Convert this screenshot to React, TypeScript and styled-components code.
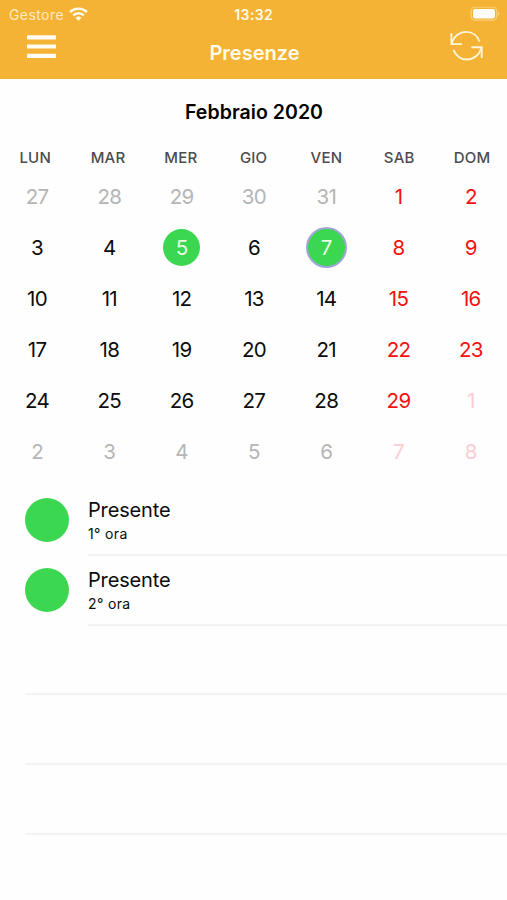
import React from "react";
import styled, { createGlobalStyle } from "styled-components";

const Global = createGlobalStyle`
  * { box-sizing: border-box; }
  body { margin: 0; background: #fff; }
`;

const Screen = styled.div`
  width: 507px;
  height: 900px;
  overflow: hidden;
  background: #fefefe;
  color: #0c0c0c;
  font-family: Inter, "Liberation Sans", sans-serif;
  display: flex;
  flex-direction: column;
`;

const Header = styled.header`
  height: 79px;
  flex: none;
  background: #f5b335;
  color: #fffbe9;
`;

const StatusBar = styled.div`
  height: 28px;
  padding: 0 7px 0 9px;
  display: grid;
  grid-template-columns: 1fr auto 1fr;
  align-items: center;
`;

const Carrier = styled.div`
  display: flex;
  align-items: center;
  gap: 5px;
  font-size: 14px;
  letter-spacing: 0.42px;
  color: #fdeabd;
`;

const Clock = styled.div`
  font-size: 14px;
  font-weight: 600;
  letter-spacing: 0.4px;
  margin-right: 1.5px;
`;

const Battery = styled.svg`
  justify-self: end;
`;

const NavBar = styled.div`
  height: 51px;
  padding: 0 23px 0 27px;
  display: grid;
  grid-template-columns: 1fr auto 1fr;
  align-items: start;
`;

const MenuIcon = styled.svg`
  margin-top: 6px;
`;

const Title = styled.h1`
  margin: 12px 2px 0 0;
  font-size: 20px;
  line-height: 26px;
  font-weight: 600;
`;

const RefreshIcon = styled.svg`
  justify-self: end;
`;

const Month = styled.h2`
  margin: 20px 0 0 1px;
  height: 26px;
  text-align: center;
  font-size: 19.5px;
  line-height: 26px;
  font-weight: 600;
  letter-spacing: 0.05px;
  color: #000;
`;

const Weekdays = styled.div`
  display: grid;
  grid-template-columns: repeat(7, 72.8px);
  margin: 23px 0 0 -1.2px;
  height: 23px;
  line-height: 20px;
  font-size: 15px;
  font-weight: 500;
  letter-spacing: 0.2px;
  text-align: center;
  color: #4b4c50;
`;

const Days = styled.div`
  display: grid;
  grid-template-columns: repeat(7, 72.3px);
  grid-auto-rows: 51px;
  margin-left: 0.9px;
`;

type Tone = "normal" | "muted" | "red" | "faded" | "onGreen";

const tones: Record<Tone, string> = {
  normal: "#0c0c0c",
  muted: "#b5b5b5",
  red: "#f5100f",
  faded: "#fbcdd3",
  onGreen: "#e6ffe6",
};

const Cell = styled.div<{ $tone: Tone }>`
  display: flex;
  align-items: center;
  justify-content: center;
  font-size: 20.5px;
  letter-spacing: -0.7px;
  color: ${(p) => tones[p.$tone]};
`;

const Marker = styled.span<{ $selected?: boolean }>`
  width: ${(p) => (p.$selected ? 41 : 37)}px;
  height: ${(p) => (p.$selected ? 41 : 37)}px;
  border: ${(p) => (p.$selected ? "2px solid #9ca7d8" : "0")};
  border-radius: 50%;
  background: #3cd750;
  display: flex;
  align-items: center;
  justify-content: center;
`;

const List = styled.div`
  margin: 9px 0 0 25px;
  display: grid;
  grid-template-rows: 70px 70px 69px 70px 70px;
`;

const Entry = styled.div`
  display: grid;
  grid-template-columns: 63px 1fr;
`;

const Dot = styled.div`
  width: 44px;
  height: 44px;
  margin-top: 12px;
  border-radius: 50%;
  background: #3cd750;
`;

const EntryText = styled.div`
  padding-top: 12px;
  border-bottom: 2px solid #f3f3f3;
`;

const EntryTitle = styled.div`
  font-size: 20px;
  line-height: 24px;
  letter-spacing: -0.15px;
`;

const EntryHour = styled.div`
  font-size: 14px;
  line-height: 20px;
  margin-top: 2px;
  letter-spacing: 0.35px;
`;

const EmptyRow = styled.div`
  border-bottom: 2px solid #f3f3f3;
`;

const weekdays = ["LUN", "MAR", "MER", "GIO", "VEN", "SAB", "DOM"];
const entries = [
  { state: "Presente", hour: "1° ora" },
  { state: "Presente", hour: "2° ora" },
];
const PRESENT = [5, 7];
const SELECTED = 7;

// 42 cells, starting on Monday 27 January 2020
const days = Array.from({ length: 42 }, (_, i) => {
  const offset = i - 4;
  const inMonth = offset >= 1 && offset <= 29;
  const label = offset < 1 ? offset + 31 : offset > 29 ? offset - 29 : offset;
  const weekend = i % 7 > 4;
  const present = inMonth && PRESENT.includes(label);
  const tone: Tone = present
    ? "onGreen"
    : weekend
      ? inMonth ? "red" : "faded"
      : inMonth ? "normal" : "muted";
  return { label, tone, present };
});

export default function App() {
  return (
    <Screen>
      <Global />
      <Header>
        <StatusBar>
          <Carrier>
            Gestore
            <svg width="19" height="15" viewBox="0 0 19 15" fill="none" stroke="#fffdf2" strokeWidth="2.4">
              <path d="M1.1 5.1a12 12 0 0 1 16.8 0" />
              <path d="M4.2 8.4a7.5 7.5 0 0 1 10.6 0" />
              <path d="M9.5 13.8 6.6 10.9a4.1 4.1 0 0 1 5.8 0Z" fill="#fffdf2" stroke="none" />
            </svg>
          </Carrier>
          <Clock>13:32</Clock>
          <Battery width="30" height="15" viewBox="0 0 30 15">
            <rect x="1.2" y="0.2" width="25.6" height="13" rx="4" fill="none" stroke="#f9cf7c" strokeWidth="1.3" />
            <rect x="3" y="2" width="22" height="9.4" rx="2.2" fill="#fffefa" />
            <path d="M28 4.5v4.4c1.8-.7 1.8-3.7 0-4.4Z" fill="#f9cf7c" />
          </Battery>
        </StatusBar>
        <NavBar>
          <MenuIcon width="29" height="26" viewBox="0 0 29 26" fill="#fffdf4">
            <rect y="1.2" width="29" height="4.2" rx="0.6" />
            <rect y="10.4" width="29" height="4.2" rx="0.6" />
            <rect y="19.8" width="29" height="4.2" rx="0.6" />
          </MenuIcon>
          <Title>Presenze</Title>
          <RefreshIcon width="34" height="34" viewBox="0 0 34 34" fill="none" stroke="#fff5d8" strokeWidth="1.9">
            <path d="M1.8 15.8C3.3 8.4 9.5 3.9 16.3 3.9c5.8 0 11 3.6 13.2 9.6" />
            <path d="M1.4 5.3V16.1H12" />
            <path d="M31.3 19.6C29.7 27 23.5 31.5 16.7 31.5c-5.8 0-11-3.6-13.2-9.6" />
            <path d="M31.7 30.1V19.3H21.3" />
          </RefreshIcon>
        </NavBar>
      </Header>
      <Month>Febbraio 2020</Month>
      <Weekdays>
        {weekdays.map((d) => <span key={d}>{d}</span>)}
      </Weekdays>
      <Days>
        {days.map((d, i) => (
          <Cell key={i} $tone={d.tone}>
            {d.present ? <Marker $selected={d.label === SELECTED}>{d.label}</Marker> : d.label}
          </Cell>
        ))}
      </Days>
      <List>
        {entries.map((e) => (
          <Entry key={e.hour}>
            <Dot />
            <EntryText>
              <EntryTitle>{e.state}</EntryTitle>
              <EntryHour>{e.hour}</EntryHour>
            </EntryText>
          </Entry>
        ))}
        <EmptyRow />
        <EmptyRow />
        <EmptyRow />
      </List>
    </Screen>
  );
}
